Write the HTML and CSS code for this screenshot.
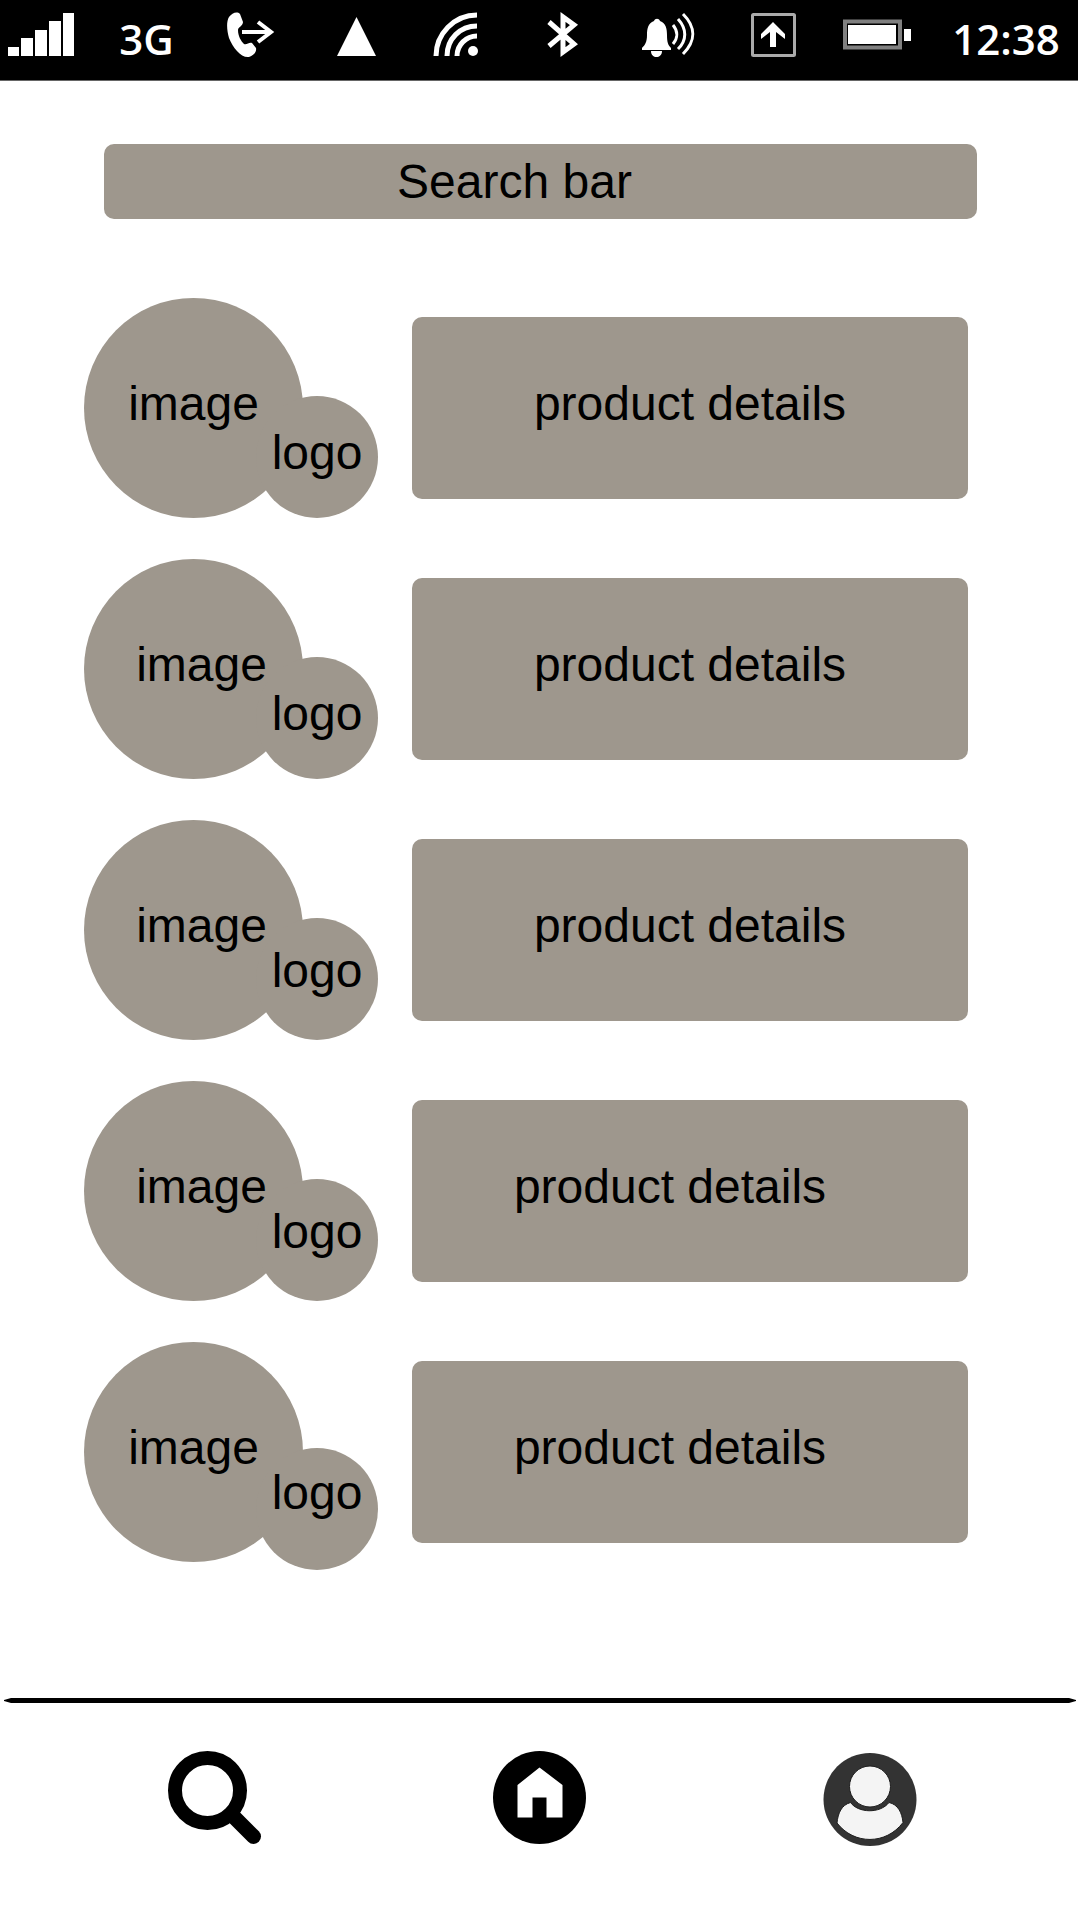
FILE: index.html
```html
<!DOCTYPE html>
<html lang="en">
<head>
<meta charset="utf-8">
<meta name="viewport" content="width=device-width, initial-scale=1">
<title>Products</title>
<link rel="stylesheet" href="styles.css">
</head>
<body>
<header class="status">
  <svg class="status-icon" viewBox="0 0 94 80" fill="#fff" role="img" aria-label="Signal"><path d="M8 47h11v9H8zM21 38h12v18H21zM35 30h12v26H35zM49 21h12v35H49zM63 13h11v43H63z"/></svg>
  <span class="status-text">3G</span>
  <svg class="status-icon" viewBox="199 0 105 80" role="img" aria-label="Call forwarding"><path fill="#fff" d="M229 17c3-4 8-6 11-3l3 8c0 4-5 5-5 8 0 6 3 11 6 14 3 1 5-2 8-1l4 5c1 4-3 8-7 9-8 1-16-9-20-19-2-7-3-16 0-21z"/><path fill="none" stroke="#fff" stroke-width="4" d="M242 32h28M258 22l13 10-13 10"/></svg>
  <svg class="status-icon" viewBox="304 0 105 80" role="img" aria-label="Network"><path fill="#fff" d="M356.500 17L376 56H337z"/></svg>
  <svg class="status-icon" viewBox="409 0 105 80" fill="none" stroke="#fff" stroke-width="5" role="img" aria-label="Wi-Fi"><path d="M436 56c0-22 18-41 41-41M447 56c0-17 13-30 30-30M457 56c0-11 9-20 20-20"/><circle cx="473" cy="51" r="5" fill="#fff" stroke="none"/></svg>
  <svg class="status-icon" viewBox="514 0 105 80" fill="none" stroke="#fff" stroke-width="5" role="img" aria-label="Bluetooth"><path d="M549 22l25 22-11 8V17l11 8-25 21"/></svg>
  <svg class="status-icon" viewBox="619 0 105 80" role="img" aria-label="Ringer on"><path fill="#fff" d="M654 21c1-3 5-3 6 0 6 2 7 8 7 14 0 7 1 10 4 13v2h-29v-2c3-3 5-6 5-13 0-6 1-12 7-14zM651 51h11c0 8-11 8-11 0z"/><path fill="none" stroke="#fff" stroke-width="3" d="M673 25c5 6 5 13 0 19M678 19c9 10 9 21 0 30M683 14c13 13 13 27 0 40"/></svg>
  <svg class="status-icon" viewBox="724 0 105 80" fill="none" role="img" aria-label="Upload"><rect x="752.500" y="14.500" width="42" height="41" rx="1" stroke="#aaa" stroke-width="3"/><path fill="#fff" d="M773 22l12 12v5l-9-7v15h-6V32l-9 7v-5z"/></svg>
  <svg class="status-icon" viewBox="829 0 105 80" role="img" aria-label="Battery"><rect x="845" y="21.500" width="55" height="26" fill="none" stroke="#808080" stroke-width="4"/><path fill="#fff" d="M848 25h48v19h-48zM904 29h7v12h-7z"/></svg>
  <time class="status-text">12:38</time>
</header>

<main class="content">
  <input class="search" type="text" placeholder="Search bar" aria-label="Search bar">
  <ul class="products">
    <li class="product">
      <div class="media"><div class="image">image</div><div class="logo">logo</div></div>
      <div class="details">product details</div>
    </li>
    <li class="product">
      <div class="media"><div class="image image-inset">image</div><div class="logo">logo</div></div>
      <div class="details">product details</div>
    </li>
    <li class="product">
      <div class="media"><div class="image image-inset">image</div><div class="logo logo-raised">logo</div></div>
      <div class="details">product details</div>
    </li>
    <li class="product">
      <div class="media"><div class="image image-inset">image</div><div class="logo logo-raised">logo</div></div>
      <div class="details details-inset">product details</div>
    </li>
    <li class="product">
      <div class="media"><div class="image">image</div><div class="logo logo-low">logo</div></div>
      <div class="details details-inset">product details</div>
    </li>
  </ul>
</main>

<nav class="tabs" aria-label="Main">
  <svg class="rule" viewBox="0 0 1080 5" preserveAspectRatio="none" aria-hidden="true"><path d="M4 2l7-2h1058l7 2v1l-7 2H11l-7-2z"/></svg>
  <div class="tab-list">
    <a class="tab" href="#search" aria-label="Search"><svg class="tab-icon" viewBox="0 0 100 100" fill="none" stroke="#000"><circle cx="45.500" cy="40.500" r="32.500" stroke-width="14"/><path d="M72 67l19.500 19.500" stroke-width="15" stroke-linecap="round"/></svg></a>
    <a class="tab" href="#home" aria-label="Home"><svg class="tab-icon" viewBox="0 0 100 100"><circle cx="49.500" cy="47.500" r="46.500"/><path fill="#fff" d="M49.500 17.500L72.500 35v32.500h-16v-20h-14v20h-15V35z"/></svg></a>
    <a class="tab" href="#profile" aria-label="Profile"><svg class="tab-icon" viewBox="0 0 100 100"><circle cx="52" cy="49.500" r="46.500" fill="#333"/><g fill="#f4f4f4" stroke="#1c1c1c"><circle cx="52" cy="36.500" r="20.500"/><path d="M32.500 52.500C40 63 62 64 71 52.500c9 2 13 10 14 20C68 95 36 95 19 73c1-10 4.500-18 13.500-20.500z"/></g></svg></a>
  </div>
</nav>
</body>
</html>
```
FILE: styles.css
```css
* {
  box-sizing: border-box;
}

body {
  margin: 0;
  min-height: 100vh;
  display: flex;
  flex-direction: column;
  background: #fff;
  color: #000;
  font: 48px/56px "Liberation Sans", Arial, sans-serif;
}

.status {
  display: grid;
  grid-template-columns: 94fr repeat(8, 105fr) 144fr;
  height: 81px;
  margin-right: 2px;
  background: #000;
  border-bottom: 1px solid #666;
}

.status-icon {
  display: block;
  width: 100%;
  height: 80px;
}

.status-text {
  color: #fff;
  font: 600 42px/78px "Open Sans", "Noto Sans", sans-serif;
  text-align: center;
}

.content {
  flex: 1;
  padding: 63px 112px 128px 84px;
}

.search {
  display: block;
  width: calc(100% - 11px);
  height: 75px;
  margin: 0 0 0 20px;
  padding: 0 52px 0 0;
  border: 0;
  border-radius: 10px;
  background: #9e978d;
  color: #000;
  font: inherit;
  text-align: center;
  appearance: none;
}

.search::placeholder {
  color: #000;
  opacity: 1;
}

.products {
  display: flex;
  flex-direction: column;
  gap: 41px;
  margin: 79px 0 0;
  padding: 0;
  list-style: none;
}

.product {
  display: flex;
  align-items: center;
  gap: 34px;
}

.media {
  position: relative;
  flex: none;
  width: 294px;
  height: 220px;
}

.image,
.logo,
.details {
  display: flex;
  align-items: center;
  justify-content: center;
  padding-bottom: 8px;
  background: #9e978d;
}

.image {
  width: 219px;
  height: 220px;
  border-radius: 50%;
}

.image-inset {
  padding-left: 16px;
}

/* The logo badge overlaps the lower right of the product image. */
.logo {
  position: absolute;
  right: 0;
  bottom: 0;
  width: 122px;
  height: 122px;
  border-radius: 50%;
}

.logo-raised {
  padding-bottom: 16px;
}

.logo-low {
  bottom: -8px;
  padding-bottom: 32px;
}

.details {
  flex: 1;
  height: 182px;
  border-radius: 10px;
}

.details-inset {
  padding-right: 40px;
}

.rule {
  display: block;
  width: 100%;
  height: 5px;
}

.tab-list {
  display: grid;
  grid-template-columns: repeat(3, 1fr);
  padding: 47px 48px 70px;
}

.tab {
  justify-self: center;
}

.tab-icon {
  display: block;
  width: 100px;
  height: 100px;
}
```
